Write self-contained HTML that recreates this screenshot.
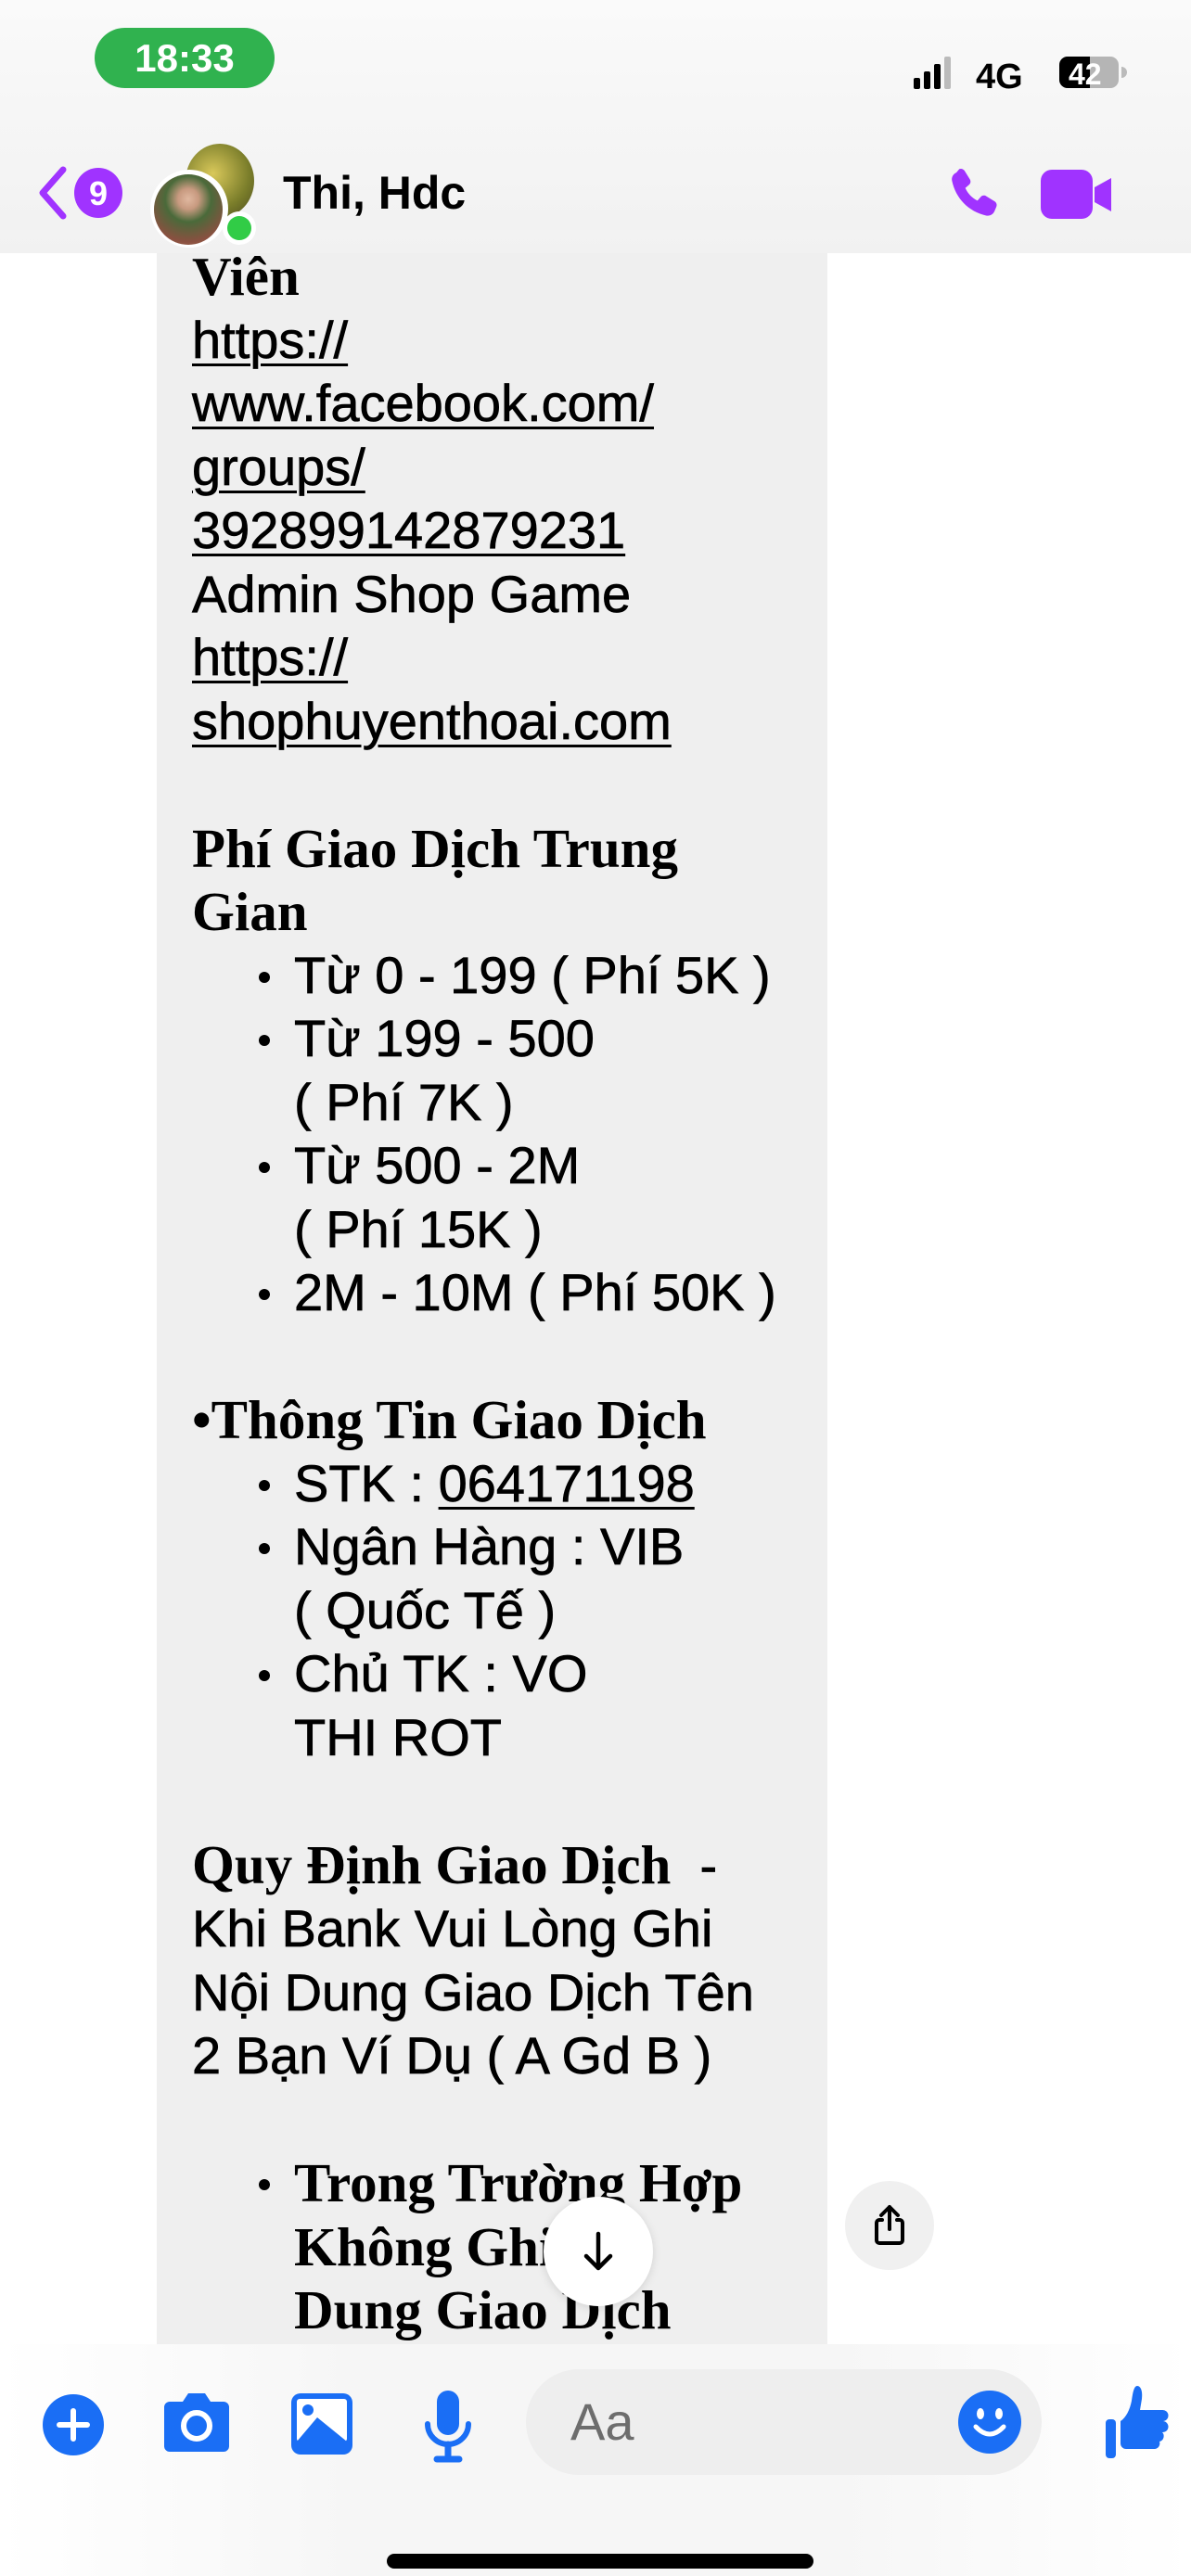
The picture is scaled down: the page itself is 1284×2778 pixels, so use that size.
<!DOCTYPE html>
<html><head><meta charset="utf-8">
<style>
*{margin:0;padding:0;box-sizing:border-box}
html,body{width:1284px;height:2778px;overflow:hidden;background:#fff;font-family:"Liberation Sans",sans-serif;color:#000}
.abs{position:absolute}
#hdr{left:0;top:0;width:1284px;height:273px;background:linear-gradient(180deg,#fafafa,#f1f1f1);z-index:5}
#bubble{left:169px;top:273px;width:723px;height:2255px;background:#efefef;overflow:hidden}
#txt{position:absolute;left:38px;top:-9px;width:680px;font-size:56px;line-height:68.5px;white-space:nowrap;-webkit-text-stroke:0.7px #000}
.s{font-family:"Liberation Serif",serif;font-weight:bold;font-size:59px;-webkit-text-stroke:0}
.u{text-decoration:underline;text-decoration-thickness:3px;text-underline-offset:6px}
.li{position:relative;padding-left:110px}
.li:before{content:"";position:absolute;left:72px;top:30px;width:12px;height:12px;border-radius:50%;background:#000}
.c{padding-left:110px}
#bar{left:0;top:2528px;width:1284px;height:250px;background:linear-gradient(90deg,#fff,#f6f6f6 30%,#f6f6f6 70%,#fff)}
</style></head><body>
<div id="hdr" class="abs">
  <div class="abs" style="left:102px;top:30px;width:194px;height:65px;border-radius:33px;background:#30b24f;color:#fff;font-size:42px;font-weight:bold;text-align:center;line-height:65px">18:33</div>
  <svg class="abs" style="left:985px;top:58px" width="300" height="40" viewBox="0 0 300 40">
    <rect x="0" y="26" width="7" height="12" rx="2" fill="#000"/><rect x="11" y="19" width="7" height="19" rx="2" fill="#000"/><rect x="22" y="11" width="7" height="27" rx="2" fill="#000"/><rect x="33" y="3" width="7" height="35" rx="2" fill="#bbb"/>
    <text x="67" y="37" font-family="Liberation Sans" font-weight="bold" font-size="38">4G</text>
    <rect x="157" y="3" width="64" height="34" rx="9" fill="#b5b5b5"/><path d="M166 3h24v34h-24a9 9 0 0 1-9-9v-16a9 9 0 0 1 9-9z" fill="#000"/>
    <text x="167" y="33" font-family="Liberation Sans" font-weight="bold" font-size="32" fill="#fff">42</text>
    <path d="M224 14a6 6 0 0 1 0 12z" fill="#bbb"/>
  </svg>
  <svg class="abs" style="left:38px;top:178px" width="100" height="60" viewBox="0 0 100 60"><path d="M30 5L8 30l22 25" fill="none" stroke="#a033ff" stroke-width="7" stroke-linecap="round" stroke-linejoin="round"/><ellipse cx="68" cy="30" rx="26" ry="27" fill="#a033ff"/><text x="68" y="43" text-anchor="middle" font-family="Liberation Sans" font-weight="bold" font-size="36" fill="#fff">9</text></svg>
  <div class="abs" style="left:200px;top:155px;width:74px;height:80px;border-radius:50%;background:radial-gradient(circle at 40% 40%,#d9c85a,#7a7d2a 60%,#4a4a20)"></div>
  <div class="abs" style="left:162px;top:183px;width:84px;height:84px;border-radius:50%;background:#fff"></div>
  <div class="abs" style="left:166px;top:188px;width:74px;height:76px;border-radius:50%;background:radial-gradient(circle at 50% 35%,#e0b8a0 0,#c89a80 18%,#4a6a3a 40%,#8a5040 75%,#b08060)"></div>
  <div class="abs" style="left:240px;top:228px;width:36px;height:36px;border-radius:50%;background:#fff"></div>
  <div class="abs" style="left:245px;top:233px;width:26px;height:26px;border-radius:50%;background:#31cc46"></div>
  <div class="abs" style="left:305px;top:178px;font-size:50px;font-weight:bold;line-height:60px">Thi, Hdc</div>
  <svg class="abs" style="left:1015px;top:175px" width="70" height="70" viewBox="0 0 24 24"><path d="M6.6 2.5c.7-.3 1.5 0 1.9.6l2 3.2c.4.7.3 1.5-.3 2l-1.4 1.2c.9 2 2.5 3.7 4.5 4.7l1.2-1.4c.5-.6 1.4-.7 2-.3l3.2 2c.6.4.9 1.2.6 1.9l-.7 1.7c-.5 1.2-1.8 1.9-3.1 1.6C10 18.2 5.3 13.4 3.900 6.9c-.3-1.3.4-2.6 1.6-3.1z" fill="#a033ff"/></svg>
  <svg class="abs" style="left:1120px;top:180px" width="82" height="60" viewBox="0 0 82 60"><rect x="2" y="3" width="56" height="53" rx="12" fill="#a033ff"/><path d="M60 22l18-10v36l-18-10z" fill="#a033ff"/></svg>
</div>

<div id="bubble" class="abs"><div id="txt">
<div class="s">Viên</div>
<div class="u">https://</div>
<div class="u">www.facebook.com/</div>
<div class="u">groups/</div>
<div class="u">392899142879231</div>
<div>Admin Shop Game</div>
<div class="u">https://</div>
<div class="u">shophuyenthoai.com</div>
<div>&nbsp;</div>
<div class="s">Phí Giao Dịch Trung</div>
<div class="s">Gian</div>
<div class="li">Từ 0 - 199 ( Phí 5K )</div>
<div class="li">Từ 199 - 500</div>
<div class="c">( Phí 7K )</div>
<div class="li">Từ 500 - 2M</div>
<div class="c">( Phí 15K )</div>
<div class="li">2M - 10M ( Phí 50K )</div>
<div>&nbsp;</div>
<div class="s">•Thông Tin Giao Dịch</div>
<div class="li">STK : <span class="u">064171198</span></div>
<div class="li">Ngân Hàng : VIB</div>
<div class="c">( Quốc Tế )</div>
<div class="li">Chủ TK : VO</div>
<div class="c">THI ROT</div>
<div>&nbsp;</div>
<div><span class="s">Quy Định Giao Dịch</span> &nbsp;-</div>
<div>Khi Bank Vui Lòng Ghi</div>
<div>Nội Dung Giao Dịch Tên</div>
<div>2 Bạn Ví Dụ ( A Gd B )</div>
<div>&nbsp;</div>
<div class="li s">Trong Trường Hợp</div>
<div class="c s">Không Ghi Nội</div>
<div class="c s">Dung Giao Dịch</div>
<div class="c s">Nếu Có</div>
</div></div>

<div class="abs" style="left:586px;top:2369px;width:118px;height:118px;border-radius:50%;background:#fff;box-shadow:0 2px 10px rgba(0,0,0,.12)"></div>
<svg class="abs" style="left:616px;top:2399px" width="58" height="58" viewBox="0 0 58 58"><path d="M29 10v36M16 34l13 13 13-13" fill="none" stroke="#000" stroke-width="4.5" stroke-linecap="round" stroke-linejoin="round"/></svg>
<div class="abs" style="left:911px;top:2352px;width:96px;height:96px;border-radius:50%;background:#f0f0f0"></div>
<svg class="abs" style="left:935px;top:2374px" width="48" height="52" viewBox="0 0 48 52"><path d="M24 30V6M15 15l9-9 9 9" fill="none" stroke="#000" stroke-width="4" stroke-linecap="round" stroke-linejoin="round"/><path d="M16 20h-3a3 3 0 0 0-3 3v19a3 3 0 0 0 3 3h22a3 3 0 0 0 3-3V23a3 3 0 0 0-3-3h-3" fill="none" stroke="#000" stroke-width="4" stroke-linecap="round"/></svg>

<div id="bar" class="abs">
  <svg class="abs" style="left:45px;top:53px" width="68" height="68" viewBox="0 0 68 68"><circle cx="34" cy="34" r="33" fill="#1a6ef5"/><path d="M34 19v30M19 34h30" stroke="#fff" stroke-width="6" stroke-linecap="round"/></svg>
  <svg class="abs" style="left:175px;top:50px" width="74" height="68" viewBox="0 0 74 68"><path d="M8 12h14l6-9h18l6 9h14a6 6 0 0 1 6 6v42a6 6 0 0 1-6 6H8a6 6 0 0 1-6-6V18a6 6 0 0 1 6-6z" fill="#1a6ef5"/><circle cx="37" cy="38" r="14" fill="none" stroke="#fff" stroke-width="6"/></svg>
  <svg class="abs" style="left:313px;top:52px" width="68" height="68" viewBox="0 0 68 68"><rect x="1" y="1" width="66" height="66" rx="10" fill="#1a6ef5"/><rect x="7" y="7" width="54" height="46" rx="3" fill="#fff"/><circle cx="19" cy="19" r="6" fill="#1a6ef5"/><path d="M7 53l22-26 32 26z" fill="#1a6ef5"/></svg>
  <svg class="abs" style="left:455px;top:48px" width="56" height="82" viewBox="0 0 56 82"><rect x="16" y="2" width="24" height="48" rx="12" fill="#1a6ef5"/><path d="M6 38a22 22 0 0 0 44 0" fill="none" stroke="#1a6ef5" stroke-width="6" stroke-linecap="round"/><path d="M28 60v12M16 76h24" stroke="#1a6ef5" stroke-width="7" stroke-linecap="round"/></svg>
  <div class="abs" style="left:567px;top:27px;width:556px;height:114px;border-radius:57px;background:#eeeeee"></div>
  <div class="abs" style="left:615px;top:52px;font-size:56px;color:#6d6d6d;line-height:64px">Aa</div>
  <svg class="abs" style="left:1032px;top:49px" width="70" height="70" viewBox="0 0 70 70"><circle cx="35" cy="35" r="34" fill="#1a6ef5"/><ellipse cx="25" cy="26" rx="4" ry="6" fill="#fff"/><ellipse cx="45" cy="26" rx="4" ry="6" fill="#fff"/><path d="M20 40q15 16 30 0" fill="none" stroke="#fff" stroke-width="5" stroke-linecap="round"/></svg>
  <svg class="abs" style="left:1190px;top:43px" width="72" height="80" viewBox="0 0 72 80"><rect x="2" y="38" width="11" height="42" rx="4" fill="#1a6ef5"/><path d="M18 40c6-4 10-12 12-22 1-6 2-16 6-16s6 6 5 14l-2 12h24a6 6 0 0 1 1 12 6 6 0 0 1-1 12 6 6 0 0 1-3 10 6 6 0 0 1-5 8H24a6 6 0 0 1-6-6z" fill="#1a6ef5"/></svg>
  <div class="abs" style="left:417px;top:226px;width:460px;height:16px;border-radius:8px;background:#000"></div>
</div>
</body></html>
